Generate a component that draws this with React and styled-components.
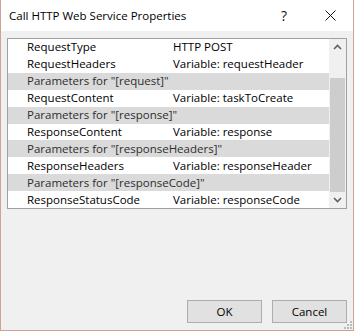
import React from 'react';
import styled, { createGlobalStyle } from 'styled-components';

const GlobalStyle = createGlobalStyle`
  html, body {
    margin: 0;
    padding: 0;
    background: #f0f0f0;
  }
  body {
    font-family: "Open Sans", "Noto Sans", sans-serif;
    font-size: 11.5px;
  }
`;

const rows = [
  { kind: 'prop', name: 'RequestType', value: 'HTTP POST' },
  { kind: 'prop', name: 'RequestHeaders', value: 'Variable: requestHeader' },
  { kind: 'cat', name: 'Parameters for "[request]"' },
  { kind: 'prop', name: 'RequestContent', value: 'Variable: taskToCreate' },
  { kind: 'cat', name: 'Parameters for "[response]"' },
  { kind: 'prop', name: 'ResponseContent', value: 'Variable: response' },
  { kind: 'cat', name: 'Parameters for "[responseHeaders]"' },
  { kind: 'prop', name: 'ResponseHeaders', value: 'Variable: responseHeader' },
  { kind: 'cat', name: 'Parameters for "[responseCode]"' },
  { kind: 'prop', name: 'ResponseStatusCode', value: 'Variable: responseCode' },
];

const Window = styled.div`
  width: 354px;
  height: 331px;
  box-sizing: border-box;
  border: 1px solid #c9a592;
  border-top: none;
  background: #f0f0f0;
  display: flex;
  flex-direction: column;
  position: relative;
`;

const TitleBar = styled.div`
  height: 31px;
  background: #fff;
  display: flex;
  align-items: center;
  padding-left: 8px;
  color: #000;
  font-size: 11.5px;
`;

const Title = styled.div`
  flex: 1;
`;

const TitleButton = styled.div`
  width: 46px;
  height: 31px;
  display: flex;
  align-items: center;
  justify-content: center;
  font-size: 14px;
  color: #111;
`;

const Body = styled.div`
  flex: 1;
  display: flex;
  flex-direction: column;
  padding: 7px 6px 7px 6px;
`;

const Grid = styled.div`
  height: 171px;
  box-sizing: border-box;
  border: 1px solid #a0a0a0;
  background: #fff;
  display: flex;
`;

const RowList = styled.div`
  flex: 1;
  display: flex;
  flex-direction: column;
`;

const Row = styled.div`
  height: 17px;
  display: grid;
  grid-template-columns: 146px 1fr;
  align-items: center;
  padding-left: 19px;
  background: ${p => (p.$cat ? '#dadada' : '#fff')};
  color: ${p => (p.$cat ? '#2e2e2e' : '#000')};
  white-space: nowrap;
  overflow: hidden;
`;

const Cell = styled.span`
  line-height: 16px;
`;

const ScrollBar = styled.div`
  width: 17px;
  background: #f0f0f0;
  display: flex;
  flex-direction: column;
`;

const Arrow = styled.div`
  height: 17px;
  display: flex;
  align-items: center;
  justify-content: center;
`;

const Track = styled.div`
  flex: 1;
  display: flex;
  flex-direction: column;
  padding-top: 22px;
`;

const Thumb = styled.div`
  margin: 0 0 0 1px;
  width: 15px;
  height: 114px;
  background: #cdcdcd;
`;

const Buttons = styled.div`
  margin-top: auto;
  display: flex;
  justify-content: flex-end;
  gap: 10px;
`;

const Button = styled.button`
  width: 75px;
  height: 23px;
  box-sizing: border-box;
  border: 1px solid #adadad;
  background: #e1e1e1;
  font-family: inherit;
  font-size: 11.5px;
  color: #000;
  padding: 0;
`;

const Grip = styled.svg`
  position: absolute;
  right: 1px;
  bottom: 1px;
`;

const Chevron = ({ up }) => (
  <svg width="9" height="6" viewBox="0 0 9 6">
    <path
      d={up ? 'M1 5 L4.5 1.5 L8 5' : 'M1 1 L4.5 4.5 L8 1'}
      fill="none"
      stroke="#606060"
      strokeWidth="1.6"
    />
  </svg>
);

const CloseIcon = () => (
  <svg width="11" height="11" viewBox="0 0 11 11">
    <path d="M0.5 0.5 L10.5 10.5 M10.5 0.5 L0.5 10.5" stroke="#111" strokeWidth="1" />
  </svg>
);

export default function App() {
  return (
    <>
      <GlobalStyle />
      <Window>
        <TitleBar>
          <Title>Call HTTP Web Service Properties</Title>
          <TitleButton>?</TitleButton>
          <TitleButton>
            <CloseIcon />
          </TitleButton>
        </TitleBar>
        <Body>
          <Grid>
            <RowList>
              {rows.map((r, i) =>
                r.kind === 'cat' ? (
                  <Row key={i} $cat>
                    <Cell>{r.name}</Cell>
                  </Row>
                ) : (
                  <Row key={i}>
                    <Cell>{r.name}</Cell>
                    <Cell>{r.value}</Cell>
                  </Row>
                )
              )}
            </RowList>
            <ScrollBar>
              <Arrow>
                <Chevron up />
              </Arrow>
              <Track>
                <Thumb />
              </Track>
              <Arrow>
                <Chevron />
              </Arrow>
            </ScrollBar>
          </Grid>
          <Buttons>
            <Button>OK</Button>
            <Button>Cancel</Button>
          </Buttons>
        </Body>
        <Grip width="8" height="8" viewBox="0 0 8 8">
          {[[6, 0], [6, 3], [3, 3], [6, 6], [3, 6], [0, 6]].map(([x, y], i) => (
            <rect key={i} x={x} y={y} width="2" height="2" fill="#bcbcbc" />
          ))}
        </Grip>
      </Window>
    </>
  );
}
